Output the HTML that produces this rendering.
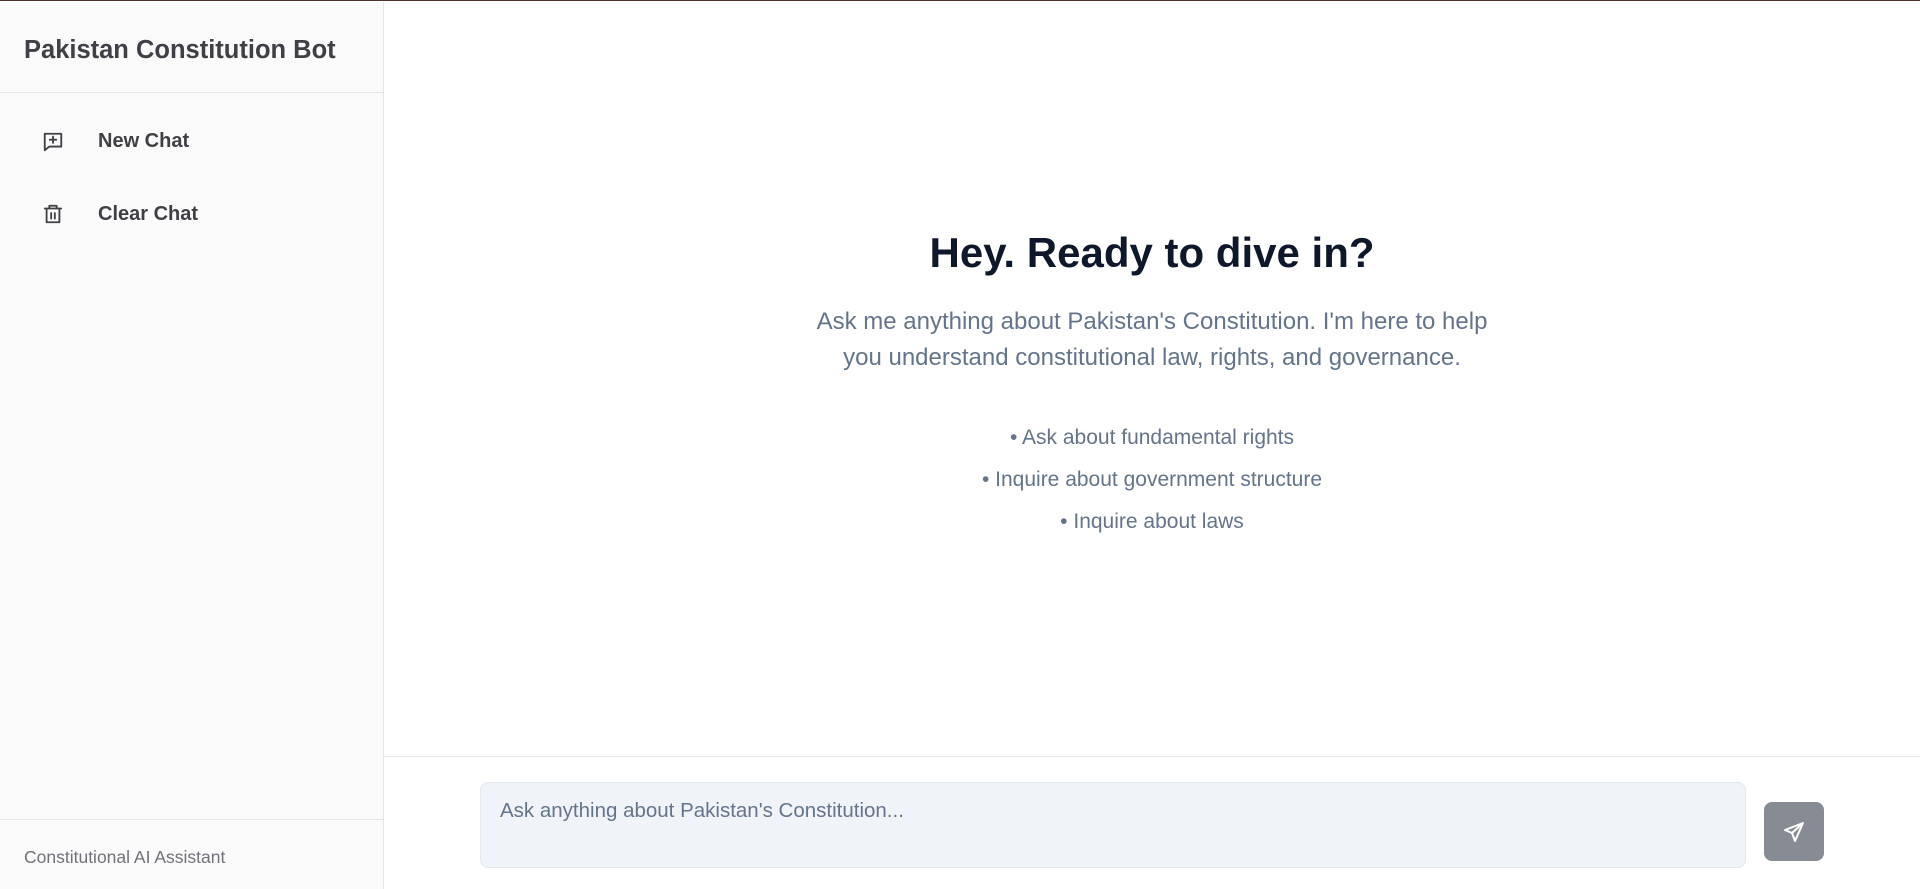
<!DOCTYPE html>
<html><head><meta charset="utf-8"><style>
*{box-sizing:border-box;margin:0;padding:0}
body{width:1920px;height:888px;overflow:hidden;font-family:"Liberation Sans",sans-serif;background:#fff;position:relative;border-top:1px solid #4a3328}
.side{position:absolute;left:0;top:1px;width:384px;height:887px;background:#fafafa;border-right:1px solid #e5e5e5}
.title{position:absolute;left:24px;top:34px;font-size:25.5px;color:#3f3f46;font-weight:600}
.hline{position:absolute;left:0;width:383px;height:1px;background:#e5e5e5}
.item{position:absolute;left:42px;display:flex;align-items:center;font-size:20px;font-weight:bold;color:#3f3f46}
.item span{margin-left:34px}
.foot{position:absolute;left:24px;top:845px;font-size:17.5px;color:#71717a}
.main{position:absolute;left:384px;top:0;right:0;text-align:center}
h1{position:absolute;left:0;right:0;top:228px;font-size:42px;color:#0f172a;font-weight:600}
.sub{position:absolute;left:0;right:0;top:303px;font-size:24px;line-height:36px;color:#64748b}
.b{position:absolute;left:0;right:0;font-size:21px;color:#64748b}
.sep{position:absolute;left:384px;right:0;top:755px;height:1px;background:#e5e7eb}
.inp{position:absolute;left:480px;top:781px;width:1266px;height:86px;background:#f0f3f8;border:1px solid #e2e8f0;border-radius:8px;padding:16px 19px;font-size:20.5px;color:#64748b}
.btn{position:absolute;left:1764px;top:801px;width:60px;height:59px;background:#878b93;border-radius:8px;display:flex;align-items:center;justify-content:center}
</style></head><body>
<div class="side">
<div class="title">Pakistan Constitution Bot</div>
<div class="hline" style="top:90px"></div>
<div class="item" style="top:128px"><svg width="22" height="22" viewBox="0 0 24 24" fill="none" stroke="#3f3f46" stroke-width="2" stroke-linejoin="round" stroke-linecap="round"><path d="M3 3h18v14H8l-5 4z"/><path d="M12 6v7M8.5 9.5h7"/></svg><span>New Chat</span></div>
<div class="item" style="top:200px"><svg width="22" height="24" viewBox="0 0 24 24" fill="none" stroke="#3f3f46" stroke-width="2" stroke-linejoin="round" stroke-linecap="round"><path d="M3 6h18M8 6V3h8v3M5 6v15h14V6M10 11v6M14 11v6"/></svg><span>Clear Chat</span></div>
<div class="hline" style="top:817px"></div>
<div class="foot">Constitutional AI Assistant</div>
</div>
<div class="main">
<h1>Hey. Ready to dive in?</h1>
<div class="sub">Ask me anything about Pakistan's Constitution. I'm here to help<br>you understand constitutional law, rights, and governance.</div>
<div class="b" style="top:425px">• Ask about fundamental rights</div>
<div class="b" style="top:467px">• Inquire about government structure</div>
<div class="b" style="top:509px">• Inquire about laws</div>
</div>
<div class="sep"></div>
<div class="inp">Ask anything about Pakistan's Constitution...</div>
<div class="btn"><svg width="24" height="24" viewBox="0 0 24 24" fill="none" stroke="#fff" stroke-width="2" stroke-linejoin="round"><path d="M21 3L3 10l7 3 3 8z M10 13l11-10"/></svg></div>
</body></html>
